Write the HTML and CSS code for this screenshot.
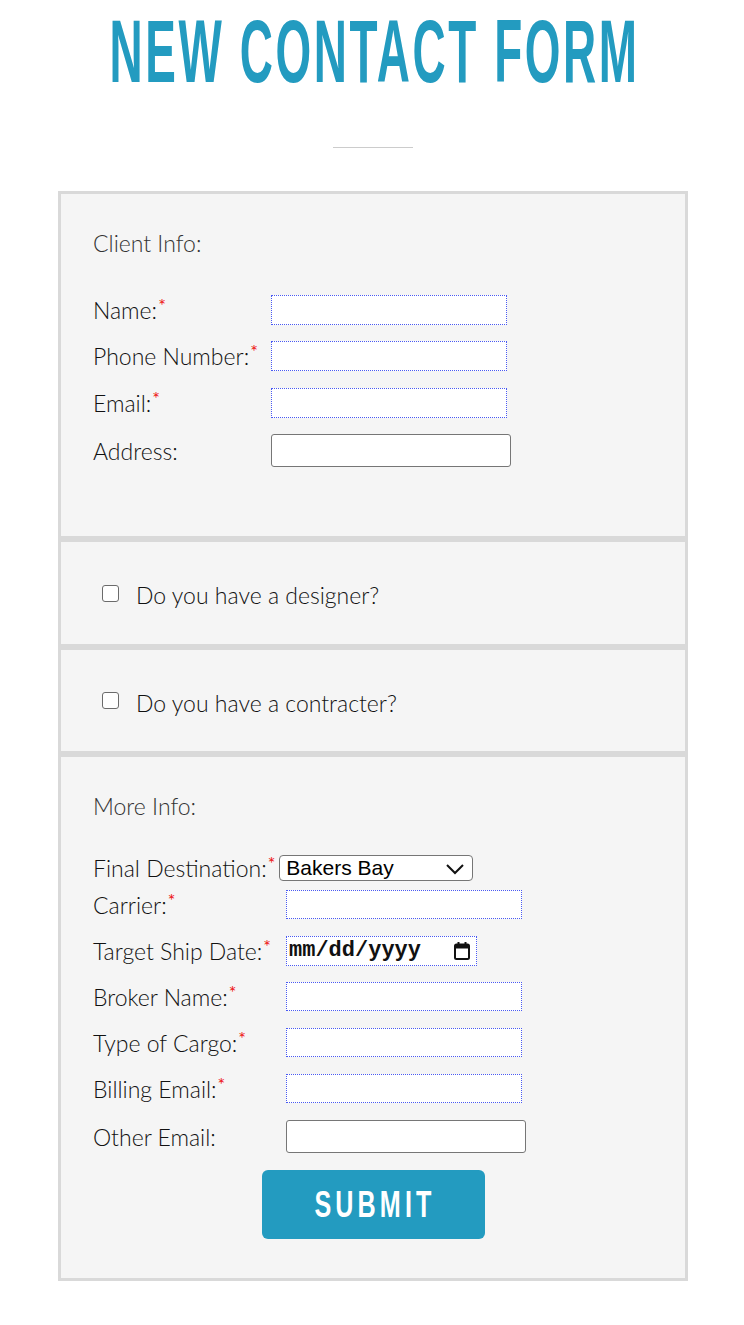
FILE: index.html
```html
<!DOCTYPE html>
<html lang="en">
<head>
<meta charset="utf-8">
<title>New Contact Form</title>
<link rel="stylesheet" href="styles.css">
</head>
<body>
<div class="page">
  <h1 class="title"><span class="title-text">NEW CONTACT FORM</span></h1>
  <div class="divider"></div>
  <form class="form">
    <div class="section section-client">
      <div class="legend">Client Info:</div>
      <div class="row row-first">
        <label class="lbl lbl-client">Name:<span class="req">*</span></label>
        <input class="field" type="text">
      </div>
      <div class="row row-gap16">
        <label class="lbl lbl-client">Phone Number:<span class="req">*</span></label>
        <input class="field" type="text">
      </div>
      <div class="row row-gap17">
        <label class="lbl lbl-client">Email:<span class="req">*</span></label>
        <input class="field" type="text">
      </div>
      <div class="row row-gap16">
        <label class="lbl lbl-client">Address:</label>
        <input class="field-plain" type="text">
      </div>
    </div>

    <div class="section section-check">
      <label class="check-label"><input class="check" type="checkbox"><span>Do you have a designer?</span></label>
    </div>

    <div class="section section-check section-check2">
      <label class="check-label"><input class="check" type="checkbox"><span>Do you have a contracter?</span></label>
    </div>

    <div class="section section-more">
      <div class="legend">More Info:</div>
      <div class="row row-dest">
        <label class="lbl lbl-auto">Final Destination:<span class="req">*</span></label>
        <div class="select-wrap">
          <select class="select">
            <option>Bakers Bay</option>
          </select>
          <svg class="chev" width="20" height="12" viewBox="0 0 20 12"><path d="M2 2 L10 10 L18 2" fill="none" stroke="#111" stroke-width="2"/></svg>
        </div>
      </div>
      <div class="row row-gap9">
        <label class="lbl lbl-more">Carrier:<span class="req">*</span></label>
        <input class="field field-s" type="text">
      </div>
      <div class="row row-gap17">
        <label class="lbl lbl-more">Target Ship Date:<span class="req">*</span></label>
        <div class="date">
          <span class="date-text">mm/dd/yyyy</span>
          <svg class="cal" width="18" height="20" viewBox="0 0 18 20"><rect x="2" y="3.5" width="14" height="14.5" rx="1.5" fill="none" stroke="#111" stroke-width="2"/><rect x="2" y="3.5" width="14" height="4" fill="#111"/><rect x="4.5" y="1" width="2" height="4" fill="#111"/><rect x="11.5" y="1" width="2" height="4" fill="#111"/></svg>
        </div>
      </div>
      <div class="row row-gap16">
        <label class="lbl lbl-more">Broker Name:<span class="req">*</span></label>
        <input class="field field-s" type="text">
      </div>
      <div class="row row-gap17">
        <label class="lbl lbl-more">Type of Cargo:<span class="req">*</span></label>
        <input class="field field-s" type="text">
      </div>
      <div class="row row-gap17">
        <label class="lbl lbl-more">Billing Email:<span class="req">*</span></label>
        <input class="field field-s" type="text">
      </div>
      <div class="row row-gap17">
        <label class="lbl lbl-more">Other Email:</label>
        <input class="field-plain" type="text">
      </div>
      <div class="submit-row">
        <button class="submit" type="button"><span class="submit-text">SUBMIT</span></button>
      </div>
    </div>
  </form>
</div>
</body>
</html>
```
FILE: styles.css
```css
html, body {
  margin: 0;
  padding: 0;
  background: #ffffff;
}

body {
  font-family: Lato, "Open Sans", sans-serif;
  font-weight: 300;
  color: #111111;
}

.page {
  width: 630px;
  margin: 0 0 0 58px;
}

.title {
  margin: 0;
  padding-top: 1px;
  height: 100px;
  line-height: 100px;
  display: flex;
  justify-content: center;
  font-family: "Liberation Sans", Arial, sans-serif;
  font-weight: 700;
  font-size: 89px;
  color: #239bc0;
  white-space: nowrap;
}

.title-text {
  display: block;
  flex: none;
  letter-spacing: 5px;
  padding-left: 5px;
  transform: scaleX(0.516);
}

.divider {
  width: 80px;
  height: 1px;
  background: #cccccc;
  margin: 46px auto 0;
}

.form {
  margin-top: 43px;
}

.section {
  border: 3px solid #d9d9d9;
  background: #f5f5f5;
  box-sizing: border-box;
}

.section-client {
  padding: 34px 32px 69px;
  display: flex;
  flex-direction: column;
}

.section-more {
  padding: 34px 32px 39px;
  display: flex;
  flex-direction: column;
}

.legend {
  font-size: 23px;
  line-height: 30px;
  color: #333333;
}

.row {
  display: flex;
  align-items: center;
}

.row-first { margin-top: 37px; }
.row-gap16 { margin-top: 16px; }
.row-gap17 { margin-top: 17px; }
.row-gap9 { margin-top: 9px; }
.row-dest { margin-top: 34px; }

.lbl {
  font-size: 23px;
  line-height: 26px;
  white-space: nowrap;
  flex: none;
}

.lbl-client { width: 178px; }
.lbl-more { width: 193px; }
.lbl-auto { margin-right: 4px; }

.req {
  color: #ee1111;
  font-size: 18px;
  line-height: 0;
  position: relative;
  top: -7px;
  margin-left: 1px;
  font-weight: 400;
}

.field {
  width: 236px;
  height: 30px;
  box-sizing: border-box;
  border: 1px dotted #4a5af2;
  background: #ffffff;
  padding: 0 4px;
  margin: 0;
  outline: none;
}

.field-s {
  height: 29px;
}

.field-plain {
  width: 240px;
  height: 33px;
  box-sizing: border-box;
  border: 1px solid #767676;
  border-radius: 3px;
  background: #ffffff;
  padding: 0 4px;
  margin: 0;
  outline: none;
}

.select-wrap {
  position: relative;
  width: 194px;
  height: 26px;
}

.select {
  appearance: none;
  -webkit-appearance: none;
  width: 194px;
  height: 26px;
  box-sizing: border-box;
  border: 1px solid #767676;
  border-radius: 4px;
  background: #ffffff;
  font-family: "Liberation Sans", Arial, sans-serif;
  font-size: 21px;
  color: #000000;
  padding: 0 0 0 6px;
  margin: 0;
  line-height: 24px;
}

.chev {
  position: absolute;
  right: 8px;
  top: 8px;
  pointer-events: none;
}

.date {
  width: 191px;
  height: 30px;
  box-sizing: border-box;
  border: 1px dotted #4a5af2;
  background: #ffffff;
  display: flex;
  align-items: center;
  justify-content: space-between;
  padding: 0 5px 0 2px;
}

.date-text {
  font-family: "Liberation Mono", "Courier New", monospace;
  font-size: 22px;
  font-weight: 700;
  line-height: 26px;
  color: #111111;
}

.cal {
  display: block;
}

.section-check {
  height: 108px;
  display: flex;
  align-items: center;
  padding-left: 41px;
}

.section-check2 {
  height: 107px;
}

.check-label {
  display: flex;
  align-items: center;
  font-size: 23px;
  line-height: 28px;
}

.check-label span {
  position: relative;
  top: 2px;
}

.check {
  appearance: none;
  -webkit-appearance: none;
  width: 17px;
  height: 17px;
  box-sizing: border-box;
  border: 1px solid #6b6b6b;
  border-radius: 3px;
  background: #ffffff;
  margin: 0 17px 0 0;
  flex: none;
}

.submit-row {
  margin-top: 17px;
  display: flex;
  justify-content: center;
}

.submit {
  width: 223px;
  height: 69px;
  background: #239bc0;
  border: none;
  border-radius: 6px;
  color: #ffffff;
  padding: 0;
  margin: 0;
  font-family: "Liberation Sans", Arial, sans-serif;
  font-weight: 700;
  font-size: 37px;
  cursor: pointer;
}

.submit-text {
  display: inline-block;
  letter-spacing: 6px;
  padding-left: 6px;
  transform: scaleX(0.68);
}
```
